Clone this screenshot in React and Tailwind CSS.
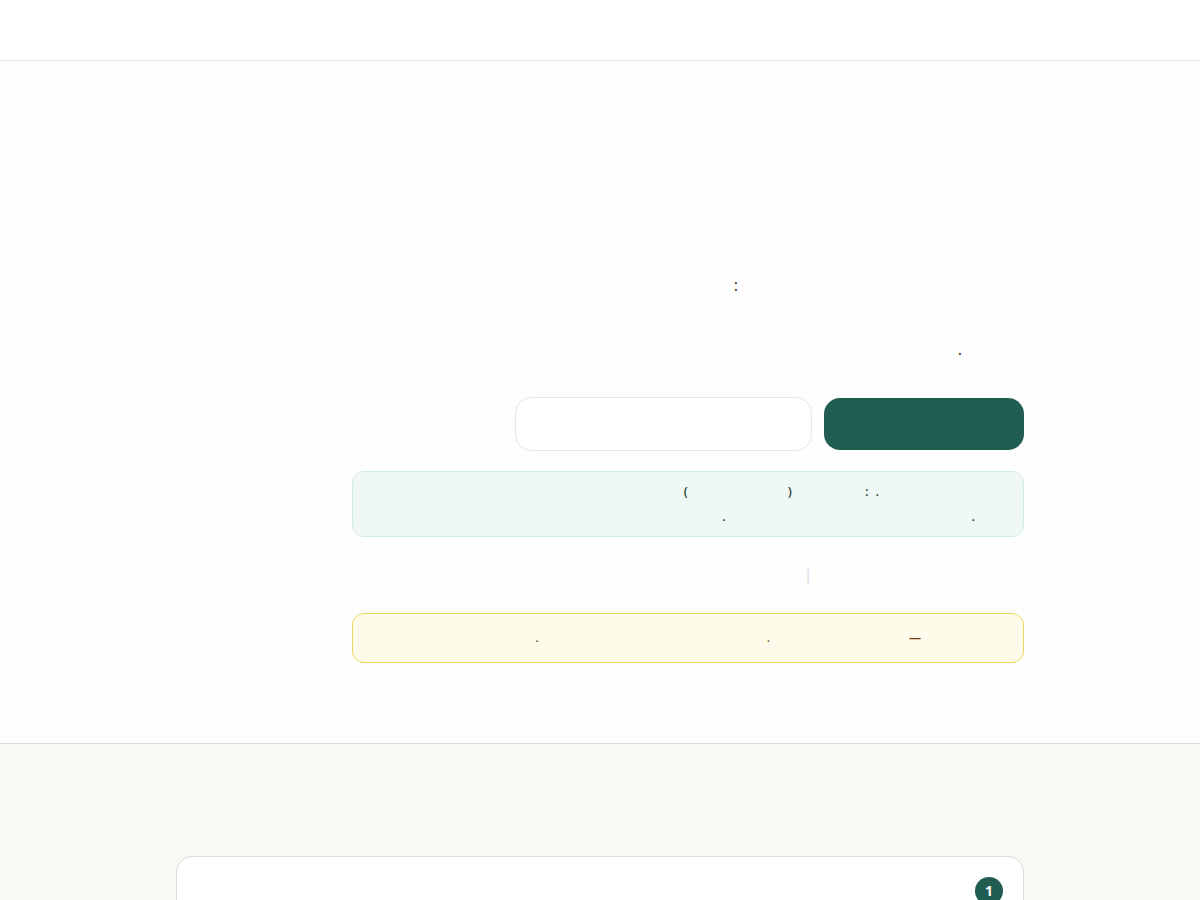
function Header() {
    return <header className="h-[61px] border-b border-[#e5e4de] bg-[#fffffd]" />;
}

function Hero() {
    return (
        <section className="border-b border-[#dedbcf] bg-[#fefefe]">
            <div className="mx-auto max-w-4xl px-6 pt-52 pb-20">
                <div className="max-w-2xl">
                    <p className="flex text-base leading-8 text-[#44403c]"><span className="ms-[286px]">:</span></p>
                    <p className="mt-8 flex text-base leading-8 text-[#44403c]"><span className="ms-[62px]">.</span></p>

                    <div className="mt-8 flex flex-wrap items-center gap-3">
                        <button type="button" aria-label="Start" className="h-13 w-50 rounded-2xl bg-[#225d51]" />
                        <button type="button" aria-label="Learn more" className="h-[54px] w-[297px] rounded-2xl border border-[#e5e5e5] bg-white" />
                    </div>

                    <div className="mt-5 rounded-xl border border-[#d0ebe3] bg-[#eff8f5] px-4 py-[7px] text-[13px] leading-[25px] text-[#1f3d37]">
                        <p className="flex font-medium">
                            <span className="ms-32">.</span>
                            <span className="ms-[7px]">:</span>
                            <span className="ms-[73px]">(</span>
                            <span className="ms-25">)</span>
                        </p>
                        <p className="flex font-medium">
                            <span className="ms-8">.</span>
                            <span className="ms-[246px]">.</span>
                        </p>
                    </div>

                    <div className="mt-[26px] flex text-sm leading-6 text-[#d8d8d8]"><span className="ms-53">|</span></div>

                    <div className="mt-[26px] rounded-xl border border-[#efd660] bg-[#fefbea] px-4 py-3 text-xs leading-6 text-[#7a3416]">
                        <p className="flex">
                            <span className="ms-[86px] font-semibold">—</span>
                            <span className="ms-[139px]">.</span>
                            <span className="ms-[228px] text-[#4a3a2c]">.</span>
                        </p>
                    </div>
                </div>
            </div>
        </section>
    );
}

function Steps() {
    return (
        <section className="bg-[#f9f8f5]">
            <div className="mx-auto max-w-4xl px-6 pt-28 pb-20">
                <div className="rounded-2xl border border-[#dfddd0] bg-white p-5">
                    <span className="flex size-7 items-center justify-center rounded-full bg-[#225d51] text-sm font-bold text-white">1</span>
                </div>
            </div>
        </section>
    );
}

export default function App() {
    return (
        <div dir="rtl" className="min-h-screen bg-[#f9f8f5] font-['Noto_Sans',sans-serif]">
            <Header />
            <main>
                <Hero />
                <Steps />
            </main>
        </div>
    );
}
